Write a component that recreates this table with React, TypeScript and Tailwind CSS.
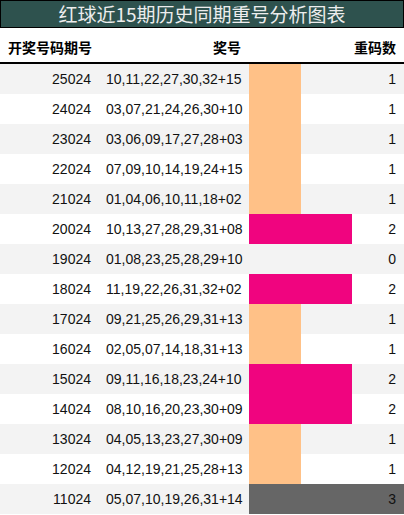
import React from 'react';

const rows = [
  { issue: '25024', nums: '10,11,22,27,30,32+15', count: 1 },
  { issue: '24024', nums: '03,07,21,24,26,30+10', count: 1 },
  { issue: '23024', nums: '03,06,09,17,27,28+03', count: 1 },
  { issue: '22024', nums: '07,09,10,14,19,24+15', count: 1 },
  { issue: '21024', nums: '01,04,06,10,11,18+02', count: 1 },
  { issue: '20024', nums: '10,13,27,28,29,31+08', count: 2 },
  { issue: '19024', nums: '01,08,23,25,28,29+10', count: 0 },
  { issue: '18024', nums: '11,19,22,26,31,32+02', count: 2 },
  { issue: '17024', nums: '09,21,25,26,29,31+13', count: 1 },
  { issue: '16024', nums: '02,05,07,14,18,31+13', count: 1 },
  { issue: '15024', nums: '09,11,16,18,23,24+10', count: 2 },
  { issue: '14024', nums: '08,10,16,20,23,30+09', count: 2 },
  { issue: '13024', nums: '04,05,13,23,27,30+09', count: 1 },
  { issue: '12024', nums: '04,12,19,21,25,28+13', count: 1 },
  { issue: '11024', nums: '05,07,10,19,26,31+14', count: 3 },
];

// bar colour by repeat count
const barColor = (n: number) => {
  if (n === 1) return 'bg-[#ffc187]';
  if (n === 2) return 'bg-[#f0047f]';
  if (n >= 3) return 'bg-[#666666]';
  return '';
};

const App = () => {
  return (
    <div
      className="w-[404px] h-[515px] bg-white overflow-hidden"
      style={{ fontFamily: '"Liberation Sans", "Noto Sans CJK SC", sans-serif' }}
    >
      <div
        className="h-[28px] border border-black bg-[#2e524e] text-[#ededed] text-[19px] leading-[26px] text-center"
        style={{ fontFamily: '"Noto Sans CJK SC", sans-serif' }}
      >
        红球近15期历史同期重号分析图表
      </div>

      <div
        className="h-[36px] flex items-center pt-[4px] border-b-2 border-black font-bold text-[14px] text-black"
        style={{ fontFamily: '"Noto Sans CJK SC", sans-serif' }}
      >
        <div className="w-[98px] pl-[8px]">开奖号码期号</div>
        <div className="w-[150px] text-right pr-[7px]">奖号</div>
        <div className="flex-1 text-right pr-[8px]">重码数</div>
      </div>

      {rows.map((r, i) => (
        <div
          key={r.issue}
          className={`h-[30px] flex items-center text-[14px] text-[#111] ${i % 2 === 0 ? 'bg-[#f3f3f3]' : 'bg-white'}`}
        >
          <div className="w-[98px] text-right pr-[7px]">{r.issue}</div>
          <div className="w-[151px] pl-[8px]">{r.nums}</div>
          <div className="relative flex-1 h-full">
            <div className={`h-full ${barColor(r.count)}`} style={{ width: r.count * 51.5 }} />
            <span className="absolute right-[8px] top-0 leading-[30px]">{r.count}</span>
          </div>
        </div>
      ))}
    </div>
  );
};

export default App;
